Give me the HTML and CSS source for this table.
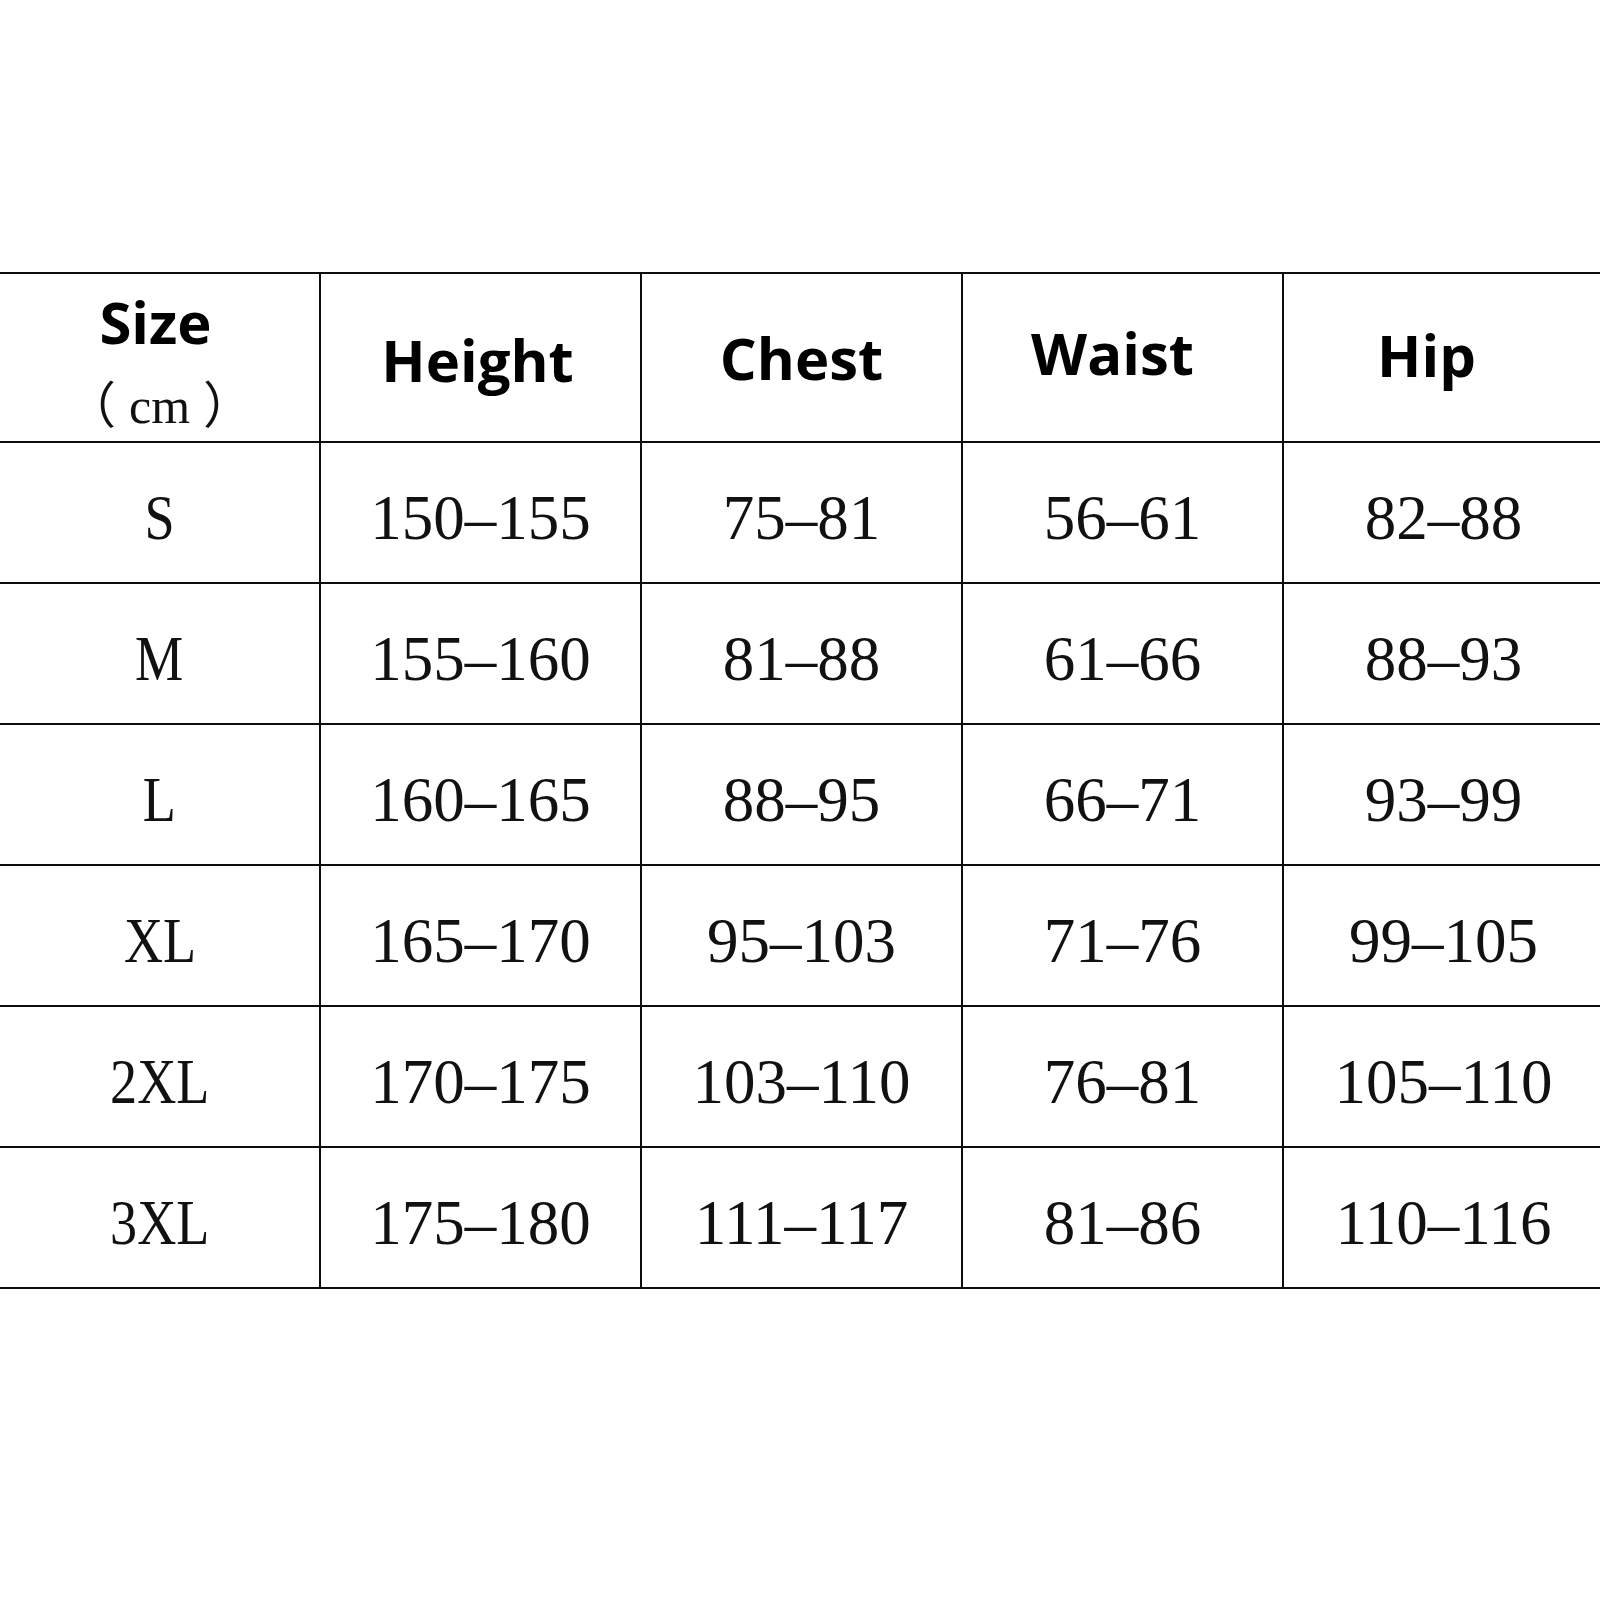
FILE: index.html
```html
<!DOCTYPE html>
<html lang="en">
<head>
<meta charset="utf-8">
<title>Size chart</title>
<link rel="stylesheet" href="styles.css">
</head>
<body>
<div class="chart">
  <div class="cell head head-size">
    <span class="size-title">Size</span>
    <span class="size-unit">（<span class="unit-text">cm</span>）</span>
  </div>
  <div class="cell head head-height">Height</div>
  <div class="cell head head-chest">Chest</div>
  <div class="cell head head-waist">Waist</div>
  <div class="cell head head-hip">Hip</div>

  <div class="cell"><span class="label">S</span></div>
  <div class="cell">150–155</div>
  <div class="cell">75–81</div>
  <div class="cell">56–61</div>
  <div class="cell">82–88</div>

  <div class="cell"><span class="label">M</span></div>
  <div class="cell">155–160</div>
  <div class="cell">81–88</div>
  <div class="cell">61–66</div>
  <div class="cell">88–93</div>

  <div class="cell"><span class="label">L</span></div>
  <div class="cell">160–165</div>
  <div class="cell">88–95</div>
  <div class="cell">66–71</div>
  <div class="cell">93–99</div>

  <div class="cell"><span class="label">XL</span></div>
  <div class="cell">165–170</div>
  <div class="cell">95–103</div>
  <div class="cell">71–76</div>
  <div class="cell">99–105</div>

  <div class="cell"><span class="label">2XL</span></div>
  <div class="cell">170–175</div>
  <div class="cell">103–110</div>
  <div class="cell">76–81</div>
  <div class="cell">105–110</div>

  <div class="cell"><span class="label">3XL</span></div>
  <div class="cell">175–180</div>
  <div class="cell">111–117</div>
  <div class="cell">81–86</div>
  <div class="cell">110–116</div>
</div>
</body>
</html>
```

FILE: styles.css
```css
html, body {
  margin: 0;
  padding: 0;
  background: #ffffff;
  overflow: hidden;
}

.chart {
  display: grid;
  grid-template-columns: repeat(5, 319px);
  grid-template-rows: 167px repeat(6, 139px);
  gap: 2px;
  padding: 2px;
  background: #0d0d0d;
  width: max-content;
  margin: 272px 0 0 -2px;
}

.cell {
  background: #ffffff;
  display: flex;
  align-items: center;
  justify-content: center;
  box-sizing: border-box;
  padding-top: 12px;
  font-family: "Liberation Serif", "Times New Roman", serif;
  font-size: 63px;
  line-height: 1;
  color: #111111;
  white-space: nowrap;
}

.label {
  display: inline-block;
  transform: scaleX(0.86);
}

.head {
  font-family: "Open Sans", "Noto Sans", sans-serif;
  font-weight: 700;
  font-size: 58px;
  color: #000000;
  padding-top: 0;
}

.head-height {
  padding-top: 5px;
  padding-right: 6px;
}

.head-chest {
  padding-top: 1px;
}

.head-waist {
  padding-bottom: 10px;
  padding-right: 20px;
}

.head-hip {
  padding-bottom: 5px;
  padding-right: 34px;
}

.head-size {
  flex-direction: column;
  justify-content: flex-start;
  padding-top: 19px;
}

.size-title {
  padding-right: 8px;
}

.size-unit {
  margin-top: 30px;
  font-family: "Liberation Serif", "Noto Sans CJK SC", serif;
  font-weight: 400;
  font-size: 50px;
  color: #111111;
}

.unit-text {
  margin: 0 13px;
}
```
